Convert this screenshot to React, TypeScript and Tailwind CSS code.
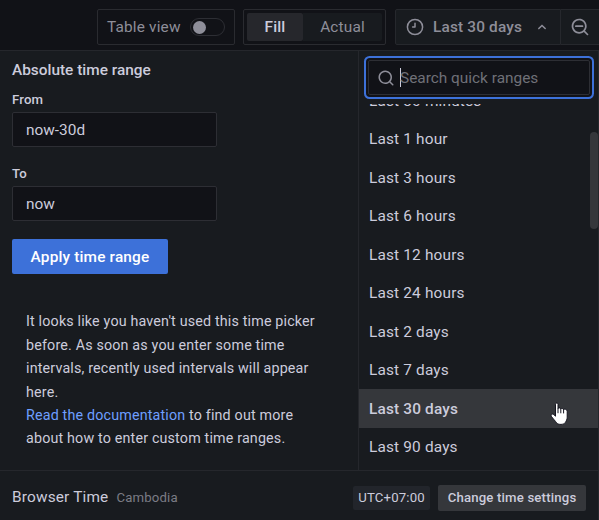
const ranges = [
  'Last 30 minutes',
  'Last 1 hour',
  'Last 3 hours',
  'Last 6 hours',
  'Last 12 hours',
  'Last 24 hours',
  'Last 2 days',
  'Last 7 days',
  'Last 30 days',
  'Last 90 days',
];

function ClockIcon() {
  return (
    <svg width="18" height="18" viewBox="0 0 18 18" fill="none" stroke="currentColor" strokeWidth="1.5" strokeLinecap="round" strokeLinejoin="round">
      <circle cx="9" cy="9" r="7.6" />
      <path d="M9 5.2V9H6.6" />
    </svg>
  );
}

function ZoomOutIcon() {
  return (
    <svg width="20" height="20" viewBox="0 0 24 24" fill="currentColor">
      <path d="M21.71,20.29,18,16.61A9,9,0,1,0,16.61,18l3.68,3.68a1,1,0,0,0,1.42,0A1,1,0,0,0,21.71,20.29ZM11,18a7,7,0,1,1,7-7A7,7,0,0,1,11,18Zm4-8H7a1,1,0,0,0,0,2h8a1,1,0,0,0,0-2Z" />
    </svg>
  );
}

function SearchIcon() {
  return (
    <svg width="18" height="18" viewBox="0 0 24 24" fill="currentColor">
      <path d="M21.71,20.29,18,16.61A9,9,0,1,0,16.61,18l3.68,3.68a1,1,0,0,0,1.42,0A1,1,0,0,0,21.71,20.29ZM11,18a7,7,0,1,1,7-7A7,7,0,0,1,11,18Z" />
    </svg>
  );
}

function AngleUpIcon() {
  return (
    <svg width="18" height="18" viewBox="0 0 24 24" fill="currentColor">
      <path d="M17,13.41,12.71,9.17a1,1,0,0,0-1.42,0L7.05,13.41a1,1,0,0,0,0,1.42,1,1,0,0,0,1.41,0L12,11.29l3.54,3.54a1,1,0,0,0,.7.29,1,1,0,0,0,.71-.29A1,1,0,0,0,17,13.41Z" />
    </svg>
  );
}

function HandPointer() {
  return (
    <svg className="absolute left-[191px] top-[13px]" width="18" height="24" viewBox="0 0 18 24">
      <path
        d="M5.5 2.2C5.5 .6 8 .6 8 2.2V6.4C8.7 5.6 10.5 5.8 10.7 6.8C11.6 6.2 13.2 6.4 13.4 7.5C14.5 6.9 17.2 7.1 17.2 9.2V15.2C17.2 17.6 16.2 18.8 15.4 20.4C13.8 23 8.2 23 6.5 20.8C5.4 19 3 16.7 1.2 14.2C.3 12.3 2.5 11.4 3.8 12.6L5.5 14.2Z"
        fill="#fff"
        stroke="#15151f"
        strokeWidth="1"
        strokeLinejoin="round"
      />
      <path d="M8 6.4v4.4M10.8 6.9v4M13.6 7.6v3.4" stroke="#15151f" strokeWidth="1" strokeLinecap="round" />
    </svg>
  );
}

function Field({ label, value }: { label: string; value: string }) {
  return (
    <div className="w-[205px]">
      <div className="h-[20px] text-[13.2px] leading-[16px] font-medium">{label}</div>
      <div className="flex h-[35px] items-center rounded-[2px] border border-[#2d2e34] bg-[#111217] pt-[2px] pl-[13px] tracking-normal">{value}</div>
    </div>
  );
}

export default function App() {
  return (
    <div className="flex h-[520px] w-[599px] flex-col overflow-hidden bg-[#111217] font-['Roboto',sans-serif] text-[15.4px] leading-[23.4px] tracking-[0.165px] text-[#ccccdc]">
      <header className="flex h-[50px] shrink-0 items-start pt-[9px] text-[#8e8e99]">
        <div className="ml-[97px] flex h-[36px] w-[138px] shrink-0 items-center rounded-[2px] border border-[#2a2b30] pl-[9px]">
          <span className="pt-px">Table view</span>
          <span className="ml-[9px] flex h-[18px] w-[35px] items-center rounded-full border border-[#2d2e34] pl-[2px]">
            <span className="size-[13px] rounded-full bg-[#8e8e99]" />
          </span>
        </div>
        <div className="ml-[8px] flex h-[36px] w-[143px] shrink-0 rounded-[2px] border border-[#2a2b30] p-[3px]">
          <div className="flex w-[56px] items-center justify-center rounded-[2px] bg-[#26272c] pt-px font-medium text-[#ccccdc]">Fill</div>
          <div className="flex flex-1 items-center justify-center rounded-r-[2px] bg-[#181b1f] pt-px">Actual</div>
        </div>
        <div className="ml-[9px] flex h-[36px] w-[166px] shrink-0 items-center rounded-l-[2px] border border-[#26282d] bg-[#181b1f] pl-[10px] font-medium">
          <ClockIcon />
          <span className="ml-[9px] w-[91px] pt-px whitespace-nowrap">Last 30 days</span>
          <span className="ml-[9px]"><AngleUpIcon /></span>
        </div>
        <div className="flex h-[36px] w-[48px] shrink-0 items-center border-y border-[#26282d] bg-[#181b1f] pl-[9px]">
          <ZoomOutIcon />
        </div>
      </header>

      <main className="flex h-[420px] shrink-0 border-t border-r border-[#25272c] bg-[#181b1f]">
        <section className="w-[358px] shrink-0 pl-[12px]">
          <h1 className="mt-[8px] font-medium tracking-normal">Absolute time range</h1>
          <div className="mt-[10px]"><Field label="From" value="now-30d" /></div>
          <div className="mt-[19px]"><Field label="To" value="now" /></div>
          <button className="mt-[18px] flex h-[35px] w-[156px] items-center justify-center rounded-[2px] bg-[#3d71d9] pt-px font-medium text-white">
            Apply time range
          </button>
          <p className="mt-[36px] pl-[14px] text-[14.3px] leading-[23.4px] whitespace-nowrap">
            It looks like you haven't used this time picker<br />
            before. As soon as you enter some time<br />
            intervals, recently used intervals will appear<br />
            here.<br />
            <a className="text-[#6e9fff]">Read the documentation</a> to find out more<br />
            about how to enter custom time ranges.
          </p>
        </section>

        <section className="flex min-w-0 flex-1 flex-col border-l border-[#25272c]">
          <div className="z-10 mt-[9px] ml-[9px] flex h-[35px] w-[222px] shrink-0 items-center rounded-[2px] border border-[#2d2e34] bg-[#111217] pl-[8px] tracking-normal text-[#6f7077] ring-2 ring-[#3d71d9] ring-offset-2 ring-offset-[#111217]">
            <span className="text-[#8e8e99]"><SearchIcon /></span>
            <span className="ml-[5px] h-[19px] w-px bg-[#ccccdc]" />
            <span className="-ml-px pt-[2px]">Search quick ranges</span>
          </div>
          <div className="relative mt-[9px] min-h-0 flex-1 overflow-hidden">
            <ul className="-mt-[23px]">
              {ranges.map((range) => (
                <li
                  key={range}
                  className={
                    range === 'Last 30 days'
                      ? 'relative flex h-[38.5px] items-center bg-[#35373b] pt-[2px] pl-[10px] font-medium'
                      : 'relative flex h-[38.5px] items-center pt-[2px] pl-[10px]'
                  }
                >
                  {range}
                  {range === 'Last 30 days' && <HandPointer />}
                </li>
              ))}
            </ul>
            <div className="absolute top-[28px] right-0 h-[97px] w-[8px] rounded-full bg-[#35373b]" />
          </div>
        </section>
      </main>

      <footer className="flex h-[50px] shrink-0 items-center border-t border-r border-[#25272c] bg-[#181b1f] pt-[4px] pl-[12px]">
        <span>Browser Time</span>
        <span className="ml-[8px] text-[13.2px] text-[#7b7c85]">Cambodia</span>
        <span className="mr-[8px] ml-auto flex h-[24px] w-[77px] items-center justify-center rounded-[2px] bg-[#22252b] text-[13.2px]">UTC+07:00</span>
        <button className="mr-[12px] flex h-[26px] w-[148px] items-center justify-center rounded-[2px] bg-[#35373b] text-[13.2px] font-medium">
          Change time settings
        </button>
      </footer>
    </div>
  );
}
